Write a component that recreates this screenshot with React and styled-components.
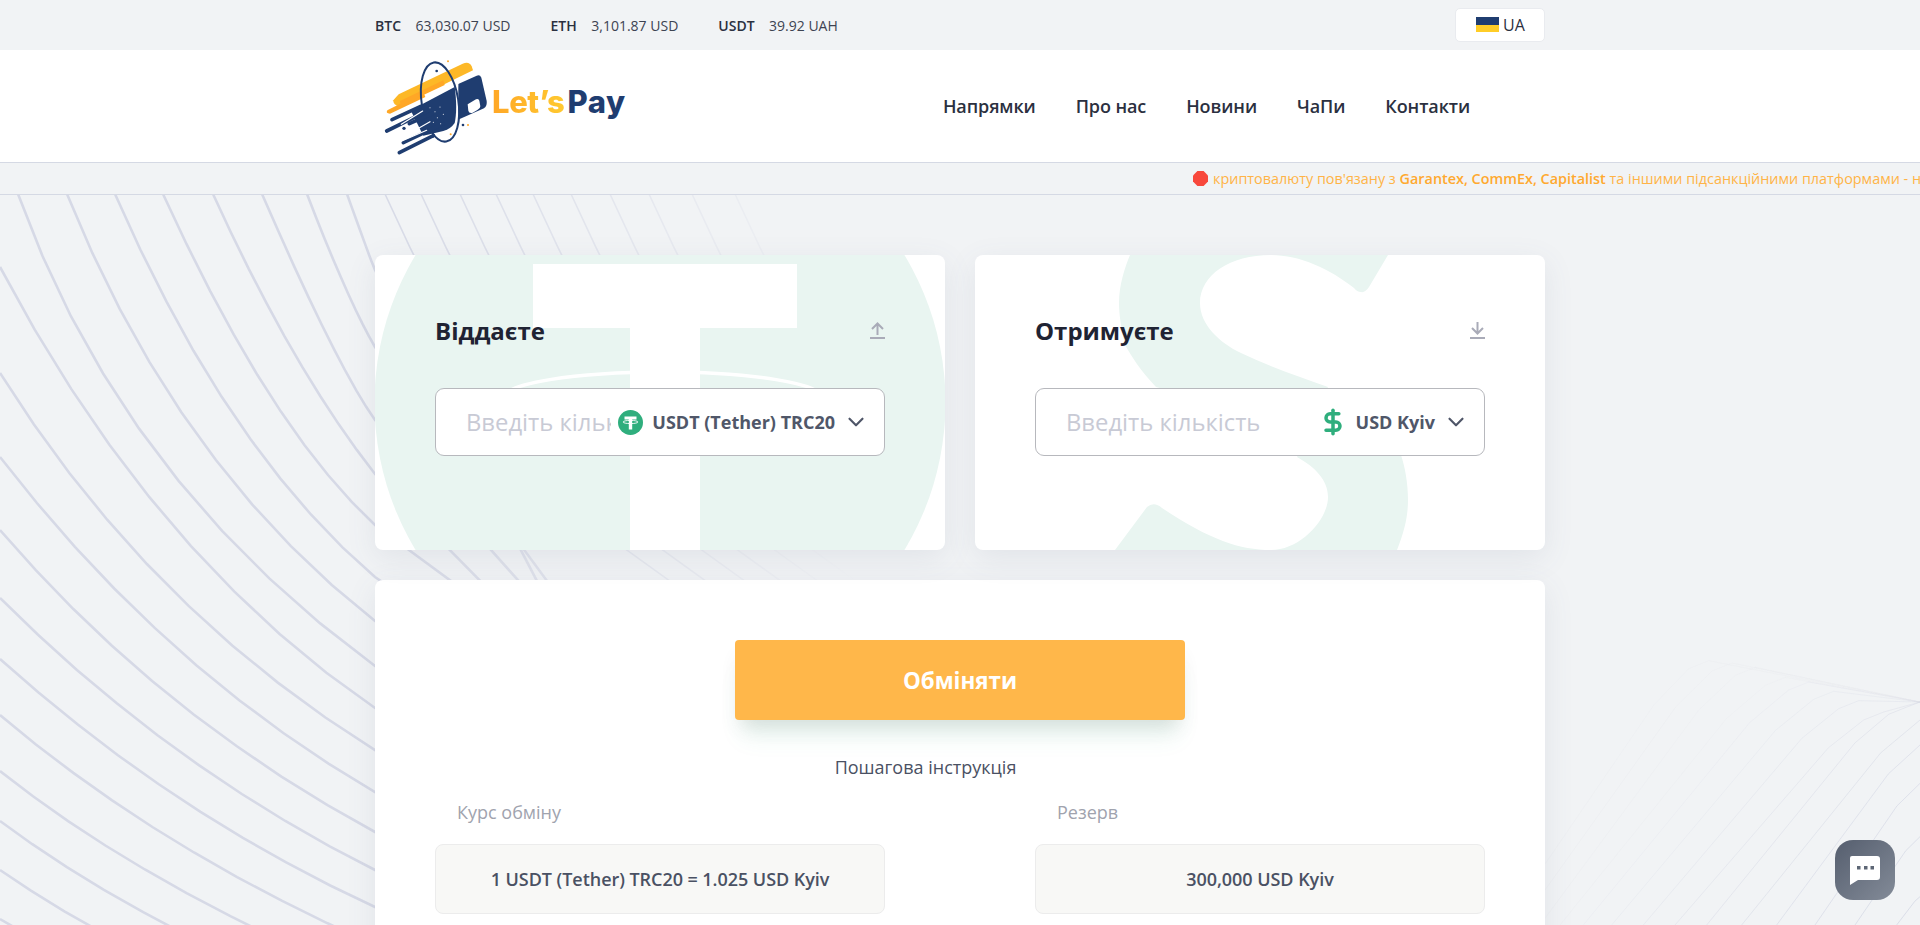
import React from 'react'
import styled, { createGlobalStyle } from 'styled-components'
import { ChevronDown, DollarSign } from 'lucide-react'

const GlobalStyle = createGlobalStyle`
    html, body {
        margin: 0;
        padding: 0;
        height: 925px;
        overflow: hidden;
        background: #f1f3f5;
        font-family: "Open Sans", "Noto Sans", sans-serif;
        color: #1f2333;
    }
    * { box-sizing: border-box; }
`

const Page = styled.div`
    position: relative;
    height: 925px;
    overflow: hidden;
`
const Wrap = styled.div`
    width: 1170px;
    margin: 0 auto;
`
const BackLines = styled.svg`
    position: absolute;
    top: 0;
    left: 0;
`
const TopBar = styled.div`
    position: relative;
    height: 50px;
    background: #f1f3f5;
`
const TopInner = styled(Wrap)`
    display: flex;
    align-items: center;
    justify-content: space-between;
    height: 50px;
`
const Rates = styled.div`
    display: flex;
    gap: 40px;
    font-size: 14px;
`
const Rate = styled.div`
    display: flex;
    gap: 14.5px;
    color: #3d4352;
    b { font-weight: 600; color: #2b3040; }
`
const LangButton = styled.button`
    display: flex;
    align-items: center;
    gap: 4px;
    width: 90px;
    height: 34px;
    margin-top: -1px;
    padding: 0 0 0 20px;
    background: #fff;
    border: 1px solid #e9ebef;
    border-radius: 5px;
    font: 16px "Open Sans", sans-serif;
    color: #2b3040;
`
const Flag = styled.span`
    display: block;
    width: 23px;
    height: 15px;
    background: linear-gradient(#1f3d70 50%, #ffcd27 50%);
`
const Header = styled.header`
    position: relative;
    height: 113px;
    background: #fff;
    border-bottom: 1px solid #d5d9e4;
`
const HeaderInner = styled(Wrap)`
    display: flex;
    align-items: center;
    justify-content: space-between;
    height: 112px;
    padding-right: 75px;
`
const Logo = styled.a`
    display: flex;
    align-items: flex-start;
    margin-left: 5px;
`
const LogoText = styled.span`
    margin: 33px 0 0 2px;
    font-family: "Inter", sans-serif;
    font-size: 31px;
    font-weight: 800;
    line-height: 36px;
    letter-spacing: -0.4px;
    white-space: nowrap;
`
const LogoLets = styled.span`
    background: linear-gradient(90deg, #ffa726, #ffc930);
    -webkit-background-clip: text;
    background-clip: text;
    color: transparent;
`
const LogoPay = styled.span`
    color: #1f3d70;
    margin-left: 3px;
    letter-spacing: 0.6px;
`
const Nav = styled.nav`
    display: flex;
    gap: 40px;
    font-size: 18px;
    font-weight: 600;
    letter-spacing: -0.1px;
    color: #2b3040;
`
const Ticker = styled.div`
    position: relative;
    height: 32px;
    background: #f1f3f5;
    border-bottom: 1px solid #d5d9e4;
    overflow: hidden;
    white-space: nowrap;
`
const TickerText = styled.div`
    display: flex;
    align-items: center;
    gap: 5px;
    height: 31px;
    padding-left: 1193px;
    font-size: 14.4px;
    color: #ffb347;
    svg { flex: none; }
    b { font-weight: 600; color: #ffa92f; }
`
const Main = styled.main`
    position: relative;
    padding-top: 60px;
`
const Row = styled.div`
    display: grid;
    grid-template-columns: 570px 570px;
    gap: 30px;
`
const Card = styled.section`
    position: relative;
    height: 295px;
    padding: 60px;
    background: #fff;
    border-radius: 8px;
    box-shadow: 0 8px 30px rgba(90, 100, 130, 0.1);
    overflow: hidden;
`
const Watermark = styled.svg`
    position: absolute;
    top: 0;
    left: 0;
`
const CardHead = styled.div`
    position: relative;
    display: flex;
    align-items: center;
    justify-content: space-between;
    height: 34px;
    margin: -2px 0 41px;
`
const CardTitle = styled.h2`
    margin: 0;
    font-size: 24px;
    font-weight: 700;
    color: #1f2333;
`
const Field = styled.div`
    position: relative;
    display: flex;
    align-items: center;
    height: 68px;
    background: #fff;
    border: 1px solid #b7b8bd;
    border-radius: 9px;
`
const AmountInput = styled.input`
    flex: 1;
    min-width: 0;
    height: 100%;
    padding: 0 0 0 30px;
    border: 0;
    outline: 0;
    background: transparent;
    font: 23.8px "Open Sans", sans-serif;
    &::placeholder { color: #c8cad5; opacity: 1; }
`
const Select = styled.div`
    display: flex;
    align-items: center;
    flex: none;
    padding: 0 15px 0 7px;
    font-size: 18px;
    font-weight: 700;
    color: #505769;
`
const SelectName = styled.span`
    margin: 0 8px 0 9px;
    white-space: nowrap;
`
const Bottom = styled.section`
    margin-top: 30px;
    padding: 60px;
    height: 400px;
    background: #fff;
    border-radius: 8px;
    box-shadow: 0 8px 30px rgba(90, 100, 130, 0.1);
`
const ExchangeButton = styled.button`
    display: block;
    width: 450px;
    height: 80px;
    margin: 0 auto;
    background: #ffb74a;
    border: 0;
    border-radius: 4px;
    box-shadow: 0 12px 18px -6px rgba(90, 90, 90, 0.16), 0 24px 24px -8px rgba(47, 174, 125, 0.1);
    font: 700 22.4px "Open Sans", sans-serif;
    color: #fff;
`
const Steps = styled.a`
    display: block;
    margin-top: 34px;
    padding-right: 69px;
    text-align: center;
    font-size: 18px;
    line-height: 26px;
    color: #4a5163;
`
const InfoGrid = styled.div`
    display: grid;
    grid-template-columns: 450px 450px;
    gap: 150px;
    margin-top: 19px;
`
const InfoLabel = styled.div`
    padding-left: 22px;
    margin-bottom: 19px;
    font-size: 18px;
    line-height: 26px;
    color: #a0a3ae;
`
const InfoBox = styled.div`
    display: flex;
    align-items: center;
    justify-content: center;
    height: 70px;
    background: #f8f8f6;
    border: 1px solid #ececec;
    border-radius: 8px;
    font-size: 18px;
    font-weight: 600;
    letter-spacing: -0.05px;
    color: #4a5163;
`
const ChatButton = styled.button`
    position: fixed;
    top: 840px;
    left: 1835px;
    display: flex;
    align-items: center;
    justify-content: center;
    width: 60px;
    height: 60px;
    padding: 0;
    border: 0;
    border-radius: 18px;
    background: linear-gradient(135deg, #555e6e, #838b98);
`

// the family of curves behind the cards: start, slope there, end, slope there
const lines = [
    [347, 194, 2.8, 375, 270, 2.4],
    [307, 194, 2.6, 375, 347, 1.7],
    [262, 194, 2.3, 375, 420, 1.4],
    [213, 194, 2.2, 375, 474, 1.27],
    [163, 194, 2.2, 375, 525, 0.92],
    [115, 194, 2.3, 375, 577, 0.85],
    [67, 194, 2.5, 375, 621, 0.78],
    [18, 194, 2.8, 375, 666, 0.73],
    [0, 267, 1.9, 375, 708, 0.68],
    [0, 373, 1.6, 375, 750, 0.62],
    [0, 457, 1.3, 375, 792, 0.58],
    [0, 530, 1.17, 375, 832, 0.54],
    [0, 598, 1.0, 375, 870, 0.5],
    [0, 659, 0.9, 375, 907, 0.46],
    [0, 715, 0.85, 375, 945, 0.44],
    [0, 771, 0.8, 375, 983, 0.42],
    [0, 821, 0.75, 375, 1020, 0.4],
    [0, 870, 0.7, 375, 1055, 0.38],
    [0, 919, 0.6, 375, 1090, 0.36],
]
const upperLines = [385, 421, 460, 496, 533, 571, 610, 649, 692, 735]

const curve = ([x0, y0, m0, x1, y1, m1]) => {
    const cx = (y1 - y0 + m0 * x0 - m1 * x1) / (m0 - m1)
    const cy = y0 + m0 * (cx - x0)
    const pts = []
    for (let i = 0; i <= 9; i++) {
        const t = i / 9
        const a = (1 - t) * (1 - t), b = 2 * t * (1 - t), c = t * t
        pts.push(`${(a * x0 + b * cx + c * x1).toFixed(1)},${(a * y0 + b * cy + c * y1).toFixed(1)}`)
    }
    pts.push(`${x1 + 420},${(y1 + 420 * m1 * 0.8).toFixed(1)}`)
    return pts.join(' ')
}

// faint mesh at the lower right
const mesh = [
    [1190, 1260, 770],
    [1065, 1260, 590],
    [945, 1260, 430],
    [830, 1260, 315],
    [725, 1260, 240],
    [620, 1190, 205],
    [525, 1115, 222],
    [430, 1040, 188],
    [335, 965, 160],
    [250, 890, 132],
    [180, 820, 118],
    [120, 730, 88],
    [60, 660, 75],
    [10, 590, 68],
]

const meshLine = ([sx, px, py]) => {
    const x0 = 1500 + sx / 3, x1 = 1500 + px / 3, y1 = 640 + py / 3
    const mx = x0 + (x1 - x0) * 0.78, my = 925 - (925 - y1) * 0.84
    if (px >= 1260) return `${x0},925 ${mx},${my} ${x1},${y1}`
    return `${x0},925 ${mx},${my} ${x1 - 8},${y1 + 6} ${x1 + 12},${y1 - 2} 1920,${702}`
}

const Background = () => (
    <BackLines width="1920" height="925" viewBox="0 0 1920 925" fill="none">
        <defs>
            <linearGradient id="fade" gradientUnits="userSpaceOnUse" x1="360" y1="0" x2="860" y2="0">
                <stop offset="0" stopColor="#d6d9e6" />
                <stop offset="1" stopColor="#d6d9e6" stopOpacity="0" />
            </linearGradient>
        </defs>
        {lines.map((l) => (
            <polyline key={l[0] + '-' + l[1]} points={curve(l)} stroke="url(#fade)" strokeWidth="2.6" />
        ))}
        {upperLines.map((x) => (
            <polyline key={x} points={curve([x, 194, 2.2, x + 200, 520, 0.9])} stroke="url(#fade)" strokeWidth="1.6" />
        ))}
        {mesh.map((m, i) => (
            <polyline key={m[0]} points={meshLine(m)} stroke="#d5d8e5" strokeWidth="1" opacity={Math.max(0.1, 0.8 - i * 0.07)} />
        ))}
    </BackLines>
)

const LogoMark = () => (
    <svg width="110" height="110" viewBox="0 0 330 330">
        <path d="M56 130 L248 38 Q268 30 275 46 L279 58 L58 166 Q38 162 40 148 Z" fill="#fdb827" />
        <path d="M22 178 L130 124 L136 138 L30 188 Q16 188 22 178 Z" fill="#ffa726" />
        <path d="M60 150 L190 88 L194 102 L62 164 Z" fill="#ffa726" />
        <path d="M228 102 L290 74 Q300 70 304 80 L320 150 Q322 166 312 172 L234 206 Z" fill="#1f3d70" />
        <path d="M263 160 L288 145 Q296 141 298 149 L301 166 Q301 173 292 177 L278 185 Q267 188 265 179 Z" fill="#fff" />
        <path d="M232 90 C228 120 236 190 228 212" stroke="#fff" strokeWidth="8" fill="none" />
        <ellipse cx="180" cy="153" rx="55" ry="120" transform="rotate(-9 180 153)" fill="none" stroke="#1f3d70" strokeWidth="6" />
        <path d="M92 178 L224 108 C230 150 230 190 224 216 Q212 234 190 240 L130 254 Z" fill="#1f3d70" />
        <g stroke="#1f3d70" strokeWidth="11" strokeLinecap="round">
            <path d="M36 206 L122 166" />
            <path d="M20 240 L126 188" />
            <path d="M88 218 L160 186" />
            <path d="M70 275 L190 218" />
            <path d="M58 305 L160 254" />
        </g>
        <g stroke="#fff" strokeWidth="3.5" strokeLinecap="round">
            <path d="M64 220 L128 180" />
            <path d="M84 250 L150 212" />
            <path d="M60 272 L140 238" />
        </g>
        <circle cx="72" cy="232" r="5" fill="#1f3d70" />
        <g fill="#fff">
            <circle cx="150" cy="170" r="1.6" />
            <circle cx="165" cy="182" r="1.6" />
            <circle cx="180" cy="168" r="1.6" />
            <circle cx="172" cy="200" r="1.6" />
            <circle cx="190" cy="190" r="1.6" />
            <circle cx="160" cy="214" r="1.6" />
            <circle cx="182" cy="218" r="1.6" />
        </g>
        <circle cx="170" cy="60" r="4" fill="#1f3d70" />
        <circle cx="204" cy="31" r="3" fill="#ffa726" />
        <circle cx="249" cy="222" r="4" fill="#1f3d70" />
        <circle cx="264" cy="222" r="3" fill="#ffa726" />
        <circle cx="212" cy="250" r="3" fill="#ffa726" />
    </svg>
)

const StopSign = () => (
    <svg width="15" height="15" viewBox="0 0 15 15">
        <path d="M4.4 0 H10.6 L15 4.4 V10.6 L10.6 15 H4.4 L0 10.6 V4.4 Z" fill="#f8483c" />
    </svg>
)

const TetherWatermark = () => (
    <Watermark width="570" height="295" viewBox="0 0 570 295">
        <circle cx="285" cy="147.5" r="285.5" fill="#e9f5f1" />
        <path d="M158 9 H422 V73 H325 V295 H255 V73 H158 Z" fill="#fff" />
        <ellipse cx="288" cy="143" rx="160" ry="26" fill="none" stroke="#fff" strokeWidth="3.5" />
    </Watermark>
)

const DollarWatermark = () => (
    <Watermark width="570" height="295" viewBox="0 0 570 295">
        <path
            d="M413 0 L394 32 Q390 38 386 37 Q382 37 379 33 C355 14 325 0 296 0 C255 0 225 20 225 48 C225 70 245 88 266 98 C295 112 325 122 353 132 L322 202 C340 212 353 225 353 242 C353 265 325 295 296 295 C265 295 235 285 187 253 Q179 246 172 252 L140 295 L422 295 C430 275 433 260 433 245 C433 228 430 212 426 200 L181 132 C165 115 157 102 150 90 C146 72 144 60 144 48 C144 30 150 12 155 0 Z"
            fill="#e9f5f1"
        />
    </Watermark>
)

const UploadIcon = () => (
    <svg width="15" height="17" viewBox="0 0 15 17" fill="none" stroke="#a9abb8" strokeWidth="2">
        <path d="M7.5 13 V1.5 M2 7 L7.5 1.5 L13 7 M0 16 H15" />
    </svg>
)

const DownloadIcon = () => (
    <svg width="15" height="17" viewBox="0 0 15 17" fill="none" stroke="#a9abb8" strokeWidth="2">
        <path d="M7.5 0 V11.5 M2 6 L7.5 11.5 L13 6 M0 16 H15" />
    </svg>
)

const TetherIcon = () => (
    <svg width="25" height="25" viewBox="0 0 25 25">
        <circle cx="12.5" cy="12.5" r="12.5" fill="#2fae7d" />
        <path d="M6.5 6.5 H18.5 V9.5 H14.2 V19.5 H10.8 V9.5 H6.5 Z" fill="#fff" />
        <ellipse cx="12.5" cy="12" rx="7.5" ry="1.6" fill="none" stroke="#fff" strokeWidth="0.9" />
    </svg>
)

const ChatIcon = () => (
    <svg width="30" height="30" viewBox="0 0 30 30">
        <path d="M2 1 H27 Q30 1 30 4 V22 Q30 25 27 25 H8 L0 30 V3 Q0 1 2 1 Z" fill="#fff" />
        <rect x="7" y="11" width="3.5" height="3.5" fill="#5d6675" />
        <rect x="14" y="11" width="3.5" height="3.5" fill="#5d6675" />
        <rect x="20.5" y="11" width="3.5" height="3.5" fill="#5d6675" />
    </svg>
)

const Exchange = ({ title, head, watermark, icon, name }) => (
    <Card>
        {watermark}
        <CardHead>
            <CardTitle>{title}</CardTitle>
            {head}
        </CardHead>
        <Field>
            <AmountInput placeholder="Введіть кількість" />
            <Select>
                {icon}
                <SelectName>{name}</SelectName>
                <ChevronDown size={26} strokeWidth={2} />
            </Select>
        </Field>
    </Card>
)

const App = () => {
    return (
        <Page>
            <GlobalStyle />
            <Background />
            <TopBar>
                <TopInner>
                    <Rates>
                        <Rate><b>BTC</b><span>63,030.07 USD</span></Rate>
                        <Rate><b>ETH</b><span>3,101.87 USD</span></Rate>
                        <Rate><b>USDT</b><span>39.92 UAH</span></Rate>
                    </Rates>
                    <LangButton><Flag />UA</LangButton>
                </TopInner>
            </TopBar>
            <Header>
                <HeaderInner>
                    <Logo>
                        <LogoMark />
                        <LogoText><LogoLets>Let’s</LogoLets><LogoPay>Pay</LogoPay></LogoText>
                    </Logo>
                    <Nav>
                        <span>Напрямки</span>
                        <span>Про нас</span>
                        <span>Новини</span>
                        <span>ЧаПи</span>
                        <span>Контакти</span>
                    </Nav>
                </HeaderInner>
            </Header>
            <Ticker>
                <TickerText>
                    <StopSign />
                    <span>криптовалюту пов'язану з <b>Garantex, CommEx, Capitalist</b> та іншими підсанкційними платформами - не приймаємо</span>
                </TickerText>
            </Ticker>
            <Main>
                <Wrap>
                    <Row>
                        <Exchange
                            title="Віддаєте"
                            head={<UploadIcon />}
                            watermark={<TetherWatermark />}
                            icon={<TetherIcon />}
                            name="USDT (Tether) TRC20"
                        />
                        <Exchange
                            title="Отримуєте"
                            head={<DownloadIcon />}
                            watermark={<DollarWatermark />}
                            icon={<DollarSign size={28} strokeWidth={3} color="#2fae7d" />}
                            name="USD Kyiv"
                        />
                    </Row>
                    <Bottom>
                        <ExchangeButton>Обміняти</ExchangeButton>
                        <Steps>Пошагова інструкція</Steps>
                        <InfoGrid>
                            <div>
                                <InfoLabel>Курс обміну</InfoLabel>
                                <InfoBox>1 USDT (Tether) TRC20 = 1.025 USD Kyiv</InfoBox>
                            </div>
                            <div>
                                <InfoLabel>Резерв</InfoLabel>
                                <InfoBox>300,000 USD Kyiv</InfoBox>
                            </div>
                        </InfoGrid>
                    </Bottom>
                </Wrap>
            </Main>
            <ChatButton><ChatIcon /></ChatButton>
        </Page>
    )
}

export default App
